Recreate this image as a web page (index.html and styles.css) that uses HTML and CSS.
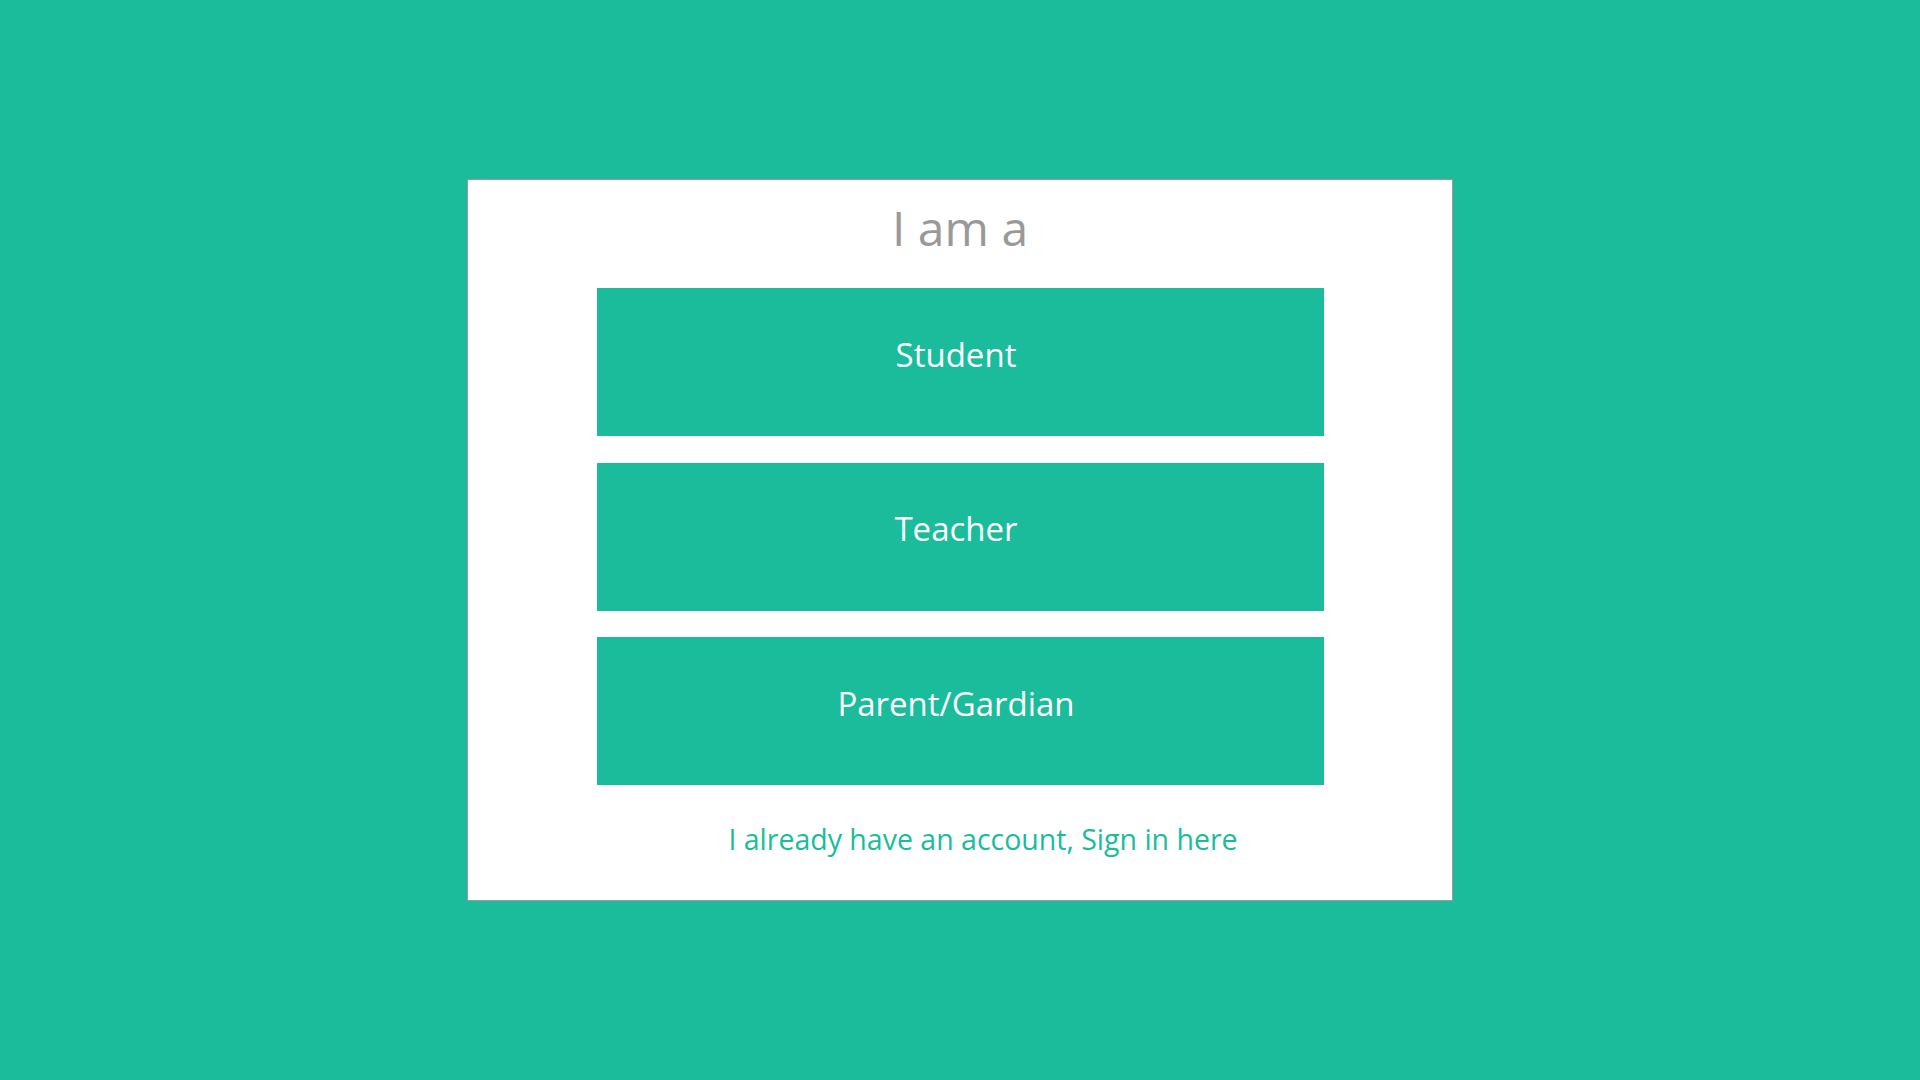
FILE: index.html
```html
<!DOCTYPE html>
<html lang="en">
<head>
<meta charset="utf-8">
<title>I am a</title>
<link rel="stylesheet" href="styles.css">
</head>
<body>
<main class="page">
  <section class="card">
    <h1 class="title">I am a</h1>
    <div class="roles">
      <a class="role" href="#">Student</a>
      <a class="role" href="#">Teacher</a>
      <a class="role" href="#">Parent/Gardian</a>
    </div>
    <a class="signin" href="#">I already have an account, Sign in here</a>
  </section>
</main>
</body>
</html>
```
FILE: styles.css
```css
* { box-sizing: border-box; }
html, body { margin: 0; padding: 0; height: 100%; }
body {
  background: #1abc9c;
  font-family: "Open Sans", "Noto Sans", sans-serif;
}
.page {
  height: 100%;
  display: flex;
  align-items: center;
  justify-content: center;
}
.card {
  width: 986px;
  height: 722px;
  background: #fff;
  border: 1px solid #9a9a9a;
  display: flex;
  flex-direction: column;
  align-items: center;
}
.title {
  margin: 8px 0 0;
  font-size: 48px;
  font-weight: 400;
  line-height: 80px;
  color: #999;
  height: 100px;
}
.roles {
  display: flex;
  flex-direction: column;
  gap: 26.5px;
  width: 727px;
}
.role {
  display: flex;
  align-items: center;
  justify-content: center;
  height: 148px;
  padding: 0 8px 16px 0;
  background: #1abc9c;
  color: #fff;
  font-size: 33px;
  text-decoration: none;
}
.signin {
  margin: 34px 0 0 46px;
  font-size: 28.5px;
  line-height: 40px;
  color: #1abc9c;
  text-decoration: none;
}
```
